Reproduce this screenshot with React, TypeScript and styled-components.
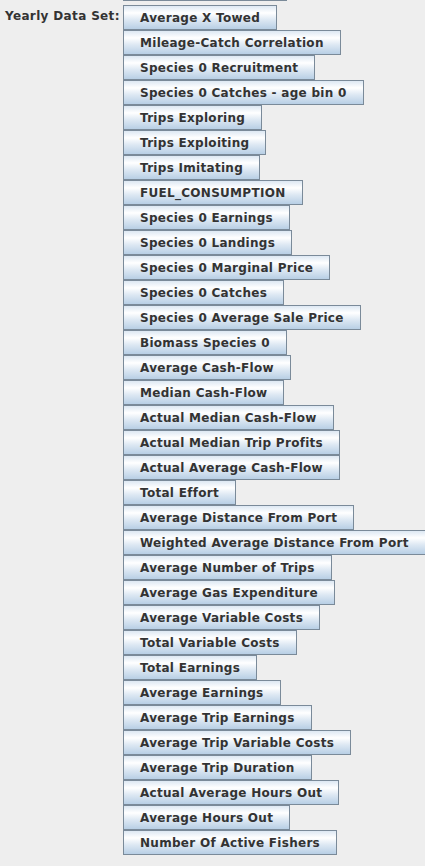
import React from "react";
import styled, { createGlobalStyle } from "styled-components";

const Global = createGlobalStyle`
  html, body {
    margin: 0;
    padding: 0;
    background: #eeeeee;
  }
  body {
    font-family: "DejaVu Sans", "Liberation Sans", sans-serif;
  }
`;

const Page = styled.div`
  display: flex;
  align-items: flex-start;
  background: #eeeeee;
  min-height: 866px;
`;

const Label = styled.div`
  width: 118px;
  box-sizing: border-box;
  padding-left: 5px;
  margin-top: 5px;
  height: 25px;
  line-height: 23px;
  font-family: "DejaVu Sans", sans-serif;
  font-weight: bold;
  font-size: 12px;
  letter-spacing: 0.35px;
  color: #333333;
  white-space: nowrap;
`;

const Column = styled.div`
  display: flex;
  flex-direction: column;
  align-items: flex-start;
  margin-left: 5px;
`;

const PrevEdge = styled.div`
  width: 164px;
  height: 1px;
  background: #7a8a99;
  margin-bottom: 4px;
`;

const Button = styled.button`
  box-sizing: border-box;
  height: 25px;
  margin: 0;
  padding: 0 16px;
  border: 1px solid #7a8a99;
  border-radius: 0;
  background: linear-gradient(
    to bottom,
    #dde8f3 0%,
    #ffffff 30%,
    #dde8f3 60%,
    #b8cfe5 100%
  );
  font-family: "DejaVu Sans", sans-serif;
  font-weight: bold;
  font-size: 12px;
  letter-spacing: 0.29px;
  color: #333333;
  white-space: nowrap;
  text-align: left;
  cursor: pointer;
`;

const items = [
  "Average X Towed",
  "Mileage-Catch Correlation",
  "Species 0 Recruitment",
  "Species 0 Catches - age bin 0",
  "Trips Exploring",
  "Trips Exploiting",
  "Trips Imitating",
  "FUEL_CONSUMPTION",
  "Species 0 Earnings",
  "Species 0 Landings",
  "Species 0 Marginal Price",
  "Species 0 Catches",
  "Species 0 Average Sale Price",
  "Biomass Species 0",
  "Average Cash-Flow",
  "Median Cash-Flow",
  "Actual Median Cash-Flow",
  "Actual Median Trip Profits",
  "Actual Average Cash-Flow",
  "Total Effort",
  "Average Distance From Port",
  "Weighted Average Distance From Port",
  "Average Number of Trips",
  "Average Gas Expenditure",
  "Average Variable Costs",
  "Total Variable Costs",
  "Total Earnings",
  "Average Earnings",
  "Average Trip Earnings",
  "Average Trip Variable Costs",
  "Average Trip Duration",
  "Actual Average Hours Out",
  "Average Hours Out",
  "Number Of Active Fishers",
];

export default function App() {
  return (
    <>
      <Global />
      <Page>
        <Label>Yearly Data Set:</Label>
        <Column>
          <PrevEdge />
          {items.map((t) => (
            <Button key={t}>{t}</Button>
          ))}
        </Column>
      </Page>
    </>
  );
}
